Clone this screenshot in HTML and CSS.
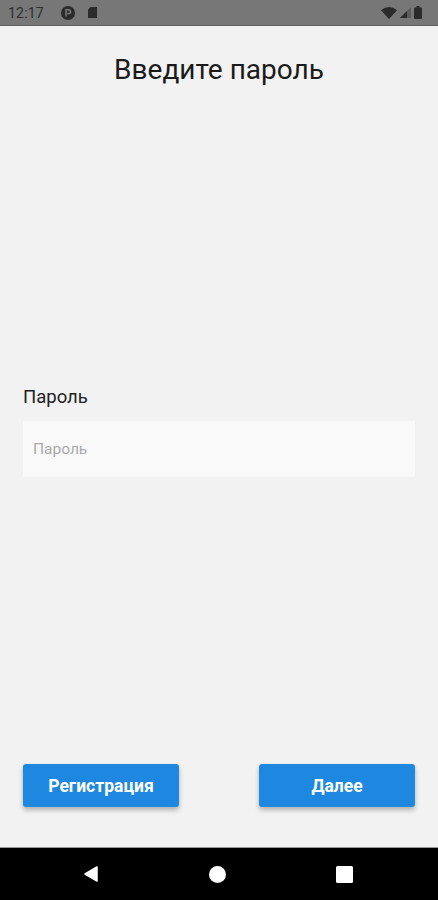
FILE: index.html
```html
<!DOCTYPE html>
<html lang="ru">
  <head>
    <meta charset="utf-8">
    <title>Введите пароль</title>
    <link rel="stylesheet" href="styles.css">
  </head>
  <body>
    <div class="screen">
      <div class="status-bar">
        <div class="status-left">
          <span class="time">12:17</span>
          <svg class="ico" width="14" height="14" viewBox="0 0 14 14">
            <circle cx="7" cy="7" r="7" fill="#2b2b2b"/>
            <path d="M5 10.5V3.8h2.6a1.9 1.9 0 0 1 0 3.8H6.2" stroke="#777" stroke-width="1.5" fill="none"/>
          </svg>
          <svg class="ico" width="9" height="11" viewBox="0 0 9 11">
            <path d="M2.5 0H9v11H0V2.5z" fill="#2b2b2b"/>
          </svg>
        </div>
        <div class="status-right">
          <svg width="16" height="12" viewBox="0 0 16 12">
            <path d="M0 3.2Q8 -3 16 3.2L8 12z" fill="#2b2b2b"/>
          </svg>
          <svg width="11" height="11" viewBox="0 0 11 11">
            <path d="M11 0V11H0z" fill="#2b2b2b" opacity="0.35"/>
            <path d="M7 4V11H0z" fill="#2b2b2b"/>
          </svg>
          <svg width="8" height="13" viewBox="0 0 8 13">
            <rect x="2.5" y="0" width="3" height="2" fill="#2b2b2b"/>
            <rect x="0" y="1.5" width="8" height="11.5" rx="1" fill="#2b2b2b"/>
          </svg>
        </div>
      </div>

      <div class="content">
        <h1 class="title">Введите пароль</h1>

        <label class="field-label" for="pass">Пароль</label>
        <input class="field" id="pass" type="password" placeholder="Пароль">

        <div class="actions">
          <button class="btn">Регистрация</button>
          <button class="btn">Далее</button>
        </div>
      </div>

      <div class="nav-bar">
        <svg width="16" height="18" viewBox="0 0 16 18">
          <path d="M14 2V16L2 9z" fill="#fff" stroke="#fff" stroke-width="1.5" stroke-linejoin="round"/>
        </svg>
        <svg width="17" height="17" viewBox="0 0 17 17">
          <circle cx="8.5" cy="8.5" r="8.5" fill="#fff"/>
        </svg>
        <svg width="17" height="17" viewBox="0 0 17 17">
          <rect width="17" height="17" rx="1.5" fill="#fff"/>
        </svg>
      </div>
    </div>
  </body>
</html>
```

FILE: styles.css
```css
* {
  box-sizing: border-box;
}
body {
  margin: 0;
  font-family: Roboto, "Noto Sans", sans-serif;
  background-color: #f2f2f2;
}
.screen {
  width: 438px;
  height: 900px;
  display: flex;
  flex-direction: column;
  background-color: #f2f2f2;
}
.status-bar {
  height: 26px;
  flex-shrink: 0;
  background-color: #777777;
  border-bottom: 1px solid #5e5e5e;
  display: flex;
  align-items: center;
  justify-content: space-between;
  padding: 0 16px 0 8px;
}
.status-left,
.status-right {
  display: flex;
  align-items: center;
}
.time {
  font-size: 14px;
  color: #2e2e2e;
  letter-spacing: 0.2px;
  margin-right: 17px;
}
.status-left .ico {
  margin-right: 13px;
}
.status-right svg {
  margin-left: 3px;
}

.content {
  flex: 1;
  display: flex;
  flex-direction: column;
  padding: 0 23px 40px;
}
.title {
  margin: 28px 0 0;
  font-size: 28px;
  line-height: 32px;
  font-weight: 400;
  text-align: center;
  color: #1a1a1a;
}
.field-label {
  margin-top: 300px;
  font-size: 18.5px;
  line-height: 22px;
  color: #222;
}
.field {
  margin-top: 13px;
  height: 56px;
  border: none;
  outline: none;
  background-color: #f9f9f9;
  padding: 0 10px;
  font-family: Roboto, "Noto Sans", sans-serif;
  font-size: 15.5px;
  color: #333;
}
.field::placeholder {
  color: #a9a9a9;
}
.actions {
  margin-top: auto;
  display: flex;
  justify-content: space-between;
}
.btn {
  width: 156px;
  height: 43px;
  border: none;
  border-radius: 3px;
  background-color: #1e88e0;
  color: #fff;
  font-family: Roboto, "Noto Sans", sans-serif;
  font-size: 17.5px;
  font-weight: 700;
  box-shadow: 0 3px 5px rgba(0, 0, 0, 0.28);
  cursor: pointer;
}

.nav-bar {
  height: 53px;
  flex-shrink: 0;
  background-color: #000;
  border-top: 1px solid #9a9a9a;
  display: flex;
  align-items: center;
  justify-content: center;
  gap: 110px;
  padding-right: 2px;
}
```
